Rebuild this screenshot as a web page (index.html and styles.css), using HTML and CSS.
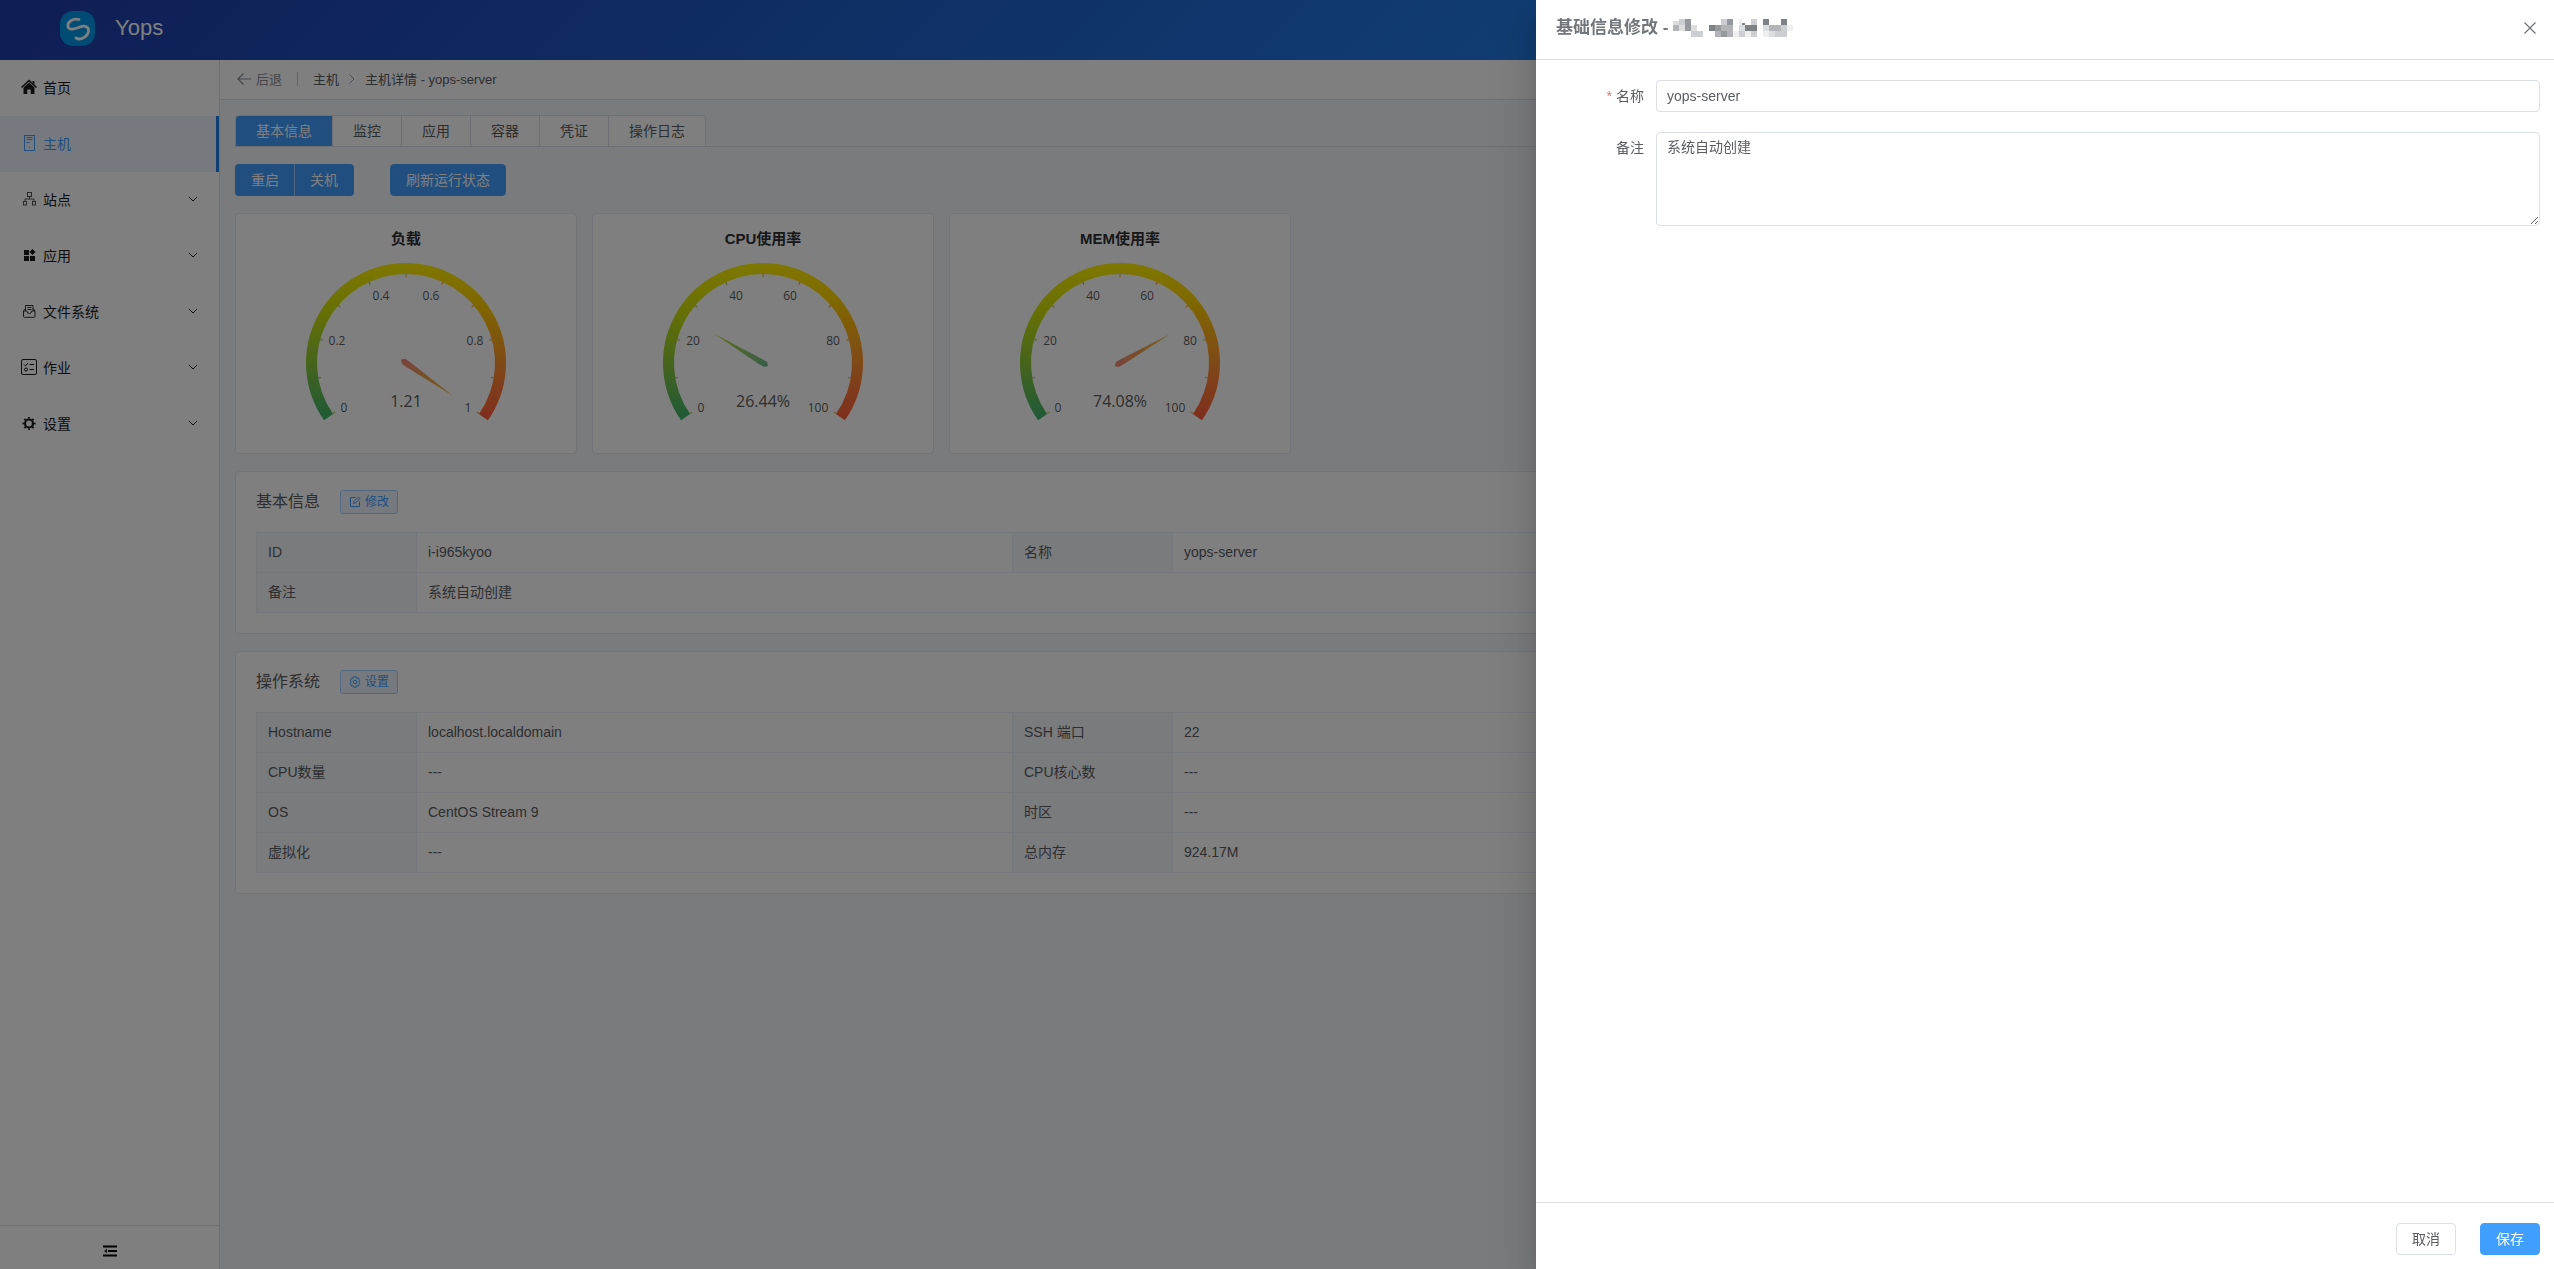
FILE: index.html
```
<!DOCTYPE html>
<html lang="zh-CN">

<head>
    <meta charset="UTF-8" />
    <meta name="viewport" content="width=device-width, initial-scale=1.0" />
    <title>Yops</title>
    <link rel="stylesheet" href="styles.css">
</head>

<body>
    <!-- Shared icons -->
    <svg class="sprite" aria-hidden="true">
        <defs>
            <linearGradient id="ringLeft" gradientUnits="userSpaceOnUse" x1="0" y1="-100" x2="0" y2="58">
                <stop offset="0" stop-color="#fff000" />
                <stop offset="0.3" stop-color="#cfe00a" />
                <stop offset="0.65" stop-color="#88c83c" />
                <stop offset="1" stop-color="#3cb371" />
            </linearGradient>
            <linearGradient id="ringRight" gradientUnits="userSpaceOnUse" x1="0" y1="-100" x2="0" y2="58">
                <stop offset="0" stop-color="#fff000" />
                <stop offset="0.25" stop-color="#ffd000" />
                <stop offset="0.65" stop-color="#ff9030" />
                <stop offset="1" stop-color="#ff5a3c" />
            </linearGradient>
            <linearGradient id="needleRed" gradientUnits="userSpaceOnUse" x1="0" y1="0" x2="58" y2="0">
                <stop offset="0" stop-color="#f08a70" />
                <stop offset="1" stop-color="#ecc62a" />
            </linearGradient>
            <linearGradient id="needleGreen" gradientUnits="userSpaceOnUse" x1="0" y1="0" x2="58" y2="0">
                <stop offset="0" stop-color="#74bf8c" />
                <stop offset="1" stop-color="#c4dc28" />
            </linearGradient>
        </defs>
        <symbol id="gauge-ring" viewBox="-170 -149 340 239">
            <path d="M-77.4 54.2A94.5 94.5 0 0 1 0 -94.5" fill="none" stroke="url(#ringLeft)" stroke-width="11" />
            <path d="M77.4 54.2A94.5 94.5 0 0 0 0 -94.5" fill="none" stroke="url(#ringRight)" stroke-width="11" />
            <path d="M-71.7 50.2A87.5 87.5 0 0 1 0 -87.5" fill="none" stroke="#a0c040" stroke-width="3" pathLength="125" stroke-dasharray="0.7 24.3" />
            <path d="M71.7 50.2A87.5 87.5 0 0 0 0 -87.5" fill="none" stroke="#f0a030" stroke-width="3" pathLength="125" stroke-dasharray="0.7 24.3" />
        </symbol>
        <symbol id="chevron" viewBox="0 0 12 12">
            <path d="M2 4l4 4 4-4" fill="none" stroke="currentColor" />
        </symbol>
    </svg>

    <div class="app">
        <header class="header">
            <svg class="logo" viewBox="0 0 35 35">
                <rect width="35" height="35" rx="13" fill="#0099e8" />
                <path d="M19 8.500C13 7 7 11 8 15.500C9 20 15 18 20 16C25 14 29 16 28.500 20C28 25 21 30 16 27" fill="none" stroke="#fff" stroke-width="2.800" stroke-linecap="round" />
            </svg>
            <span class="brand">Yops</span>
        </header>

        <div class="body">
            <aside class="sidebar">
                <nav class="menu">
                    <a class="menu-item" href="#">
                        <svg class="menu-icon" viewBox="0 0 18 18">
                            <path d="M1.500 9.500L9 2.500l7.500 7" fill="none" stroke="currentColor" stroke-width="1.600" />
                            <path d="M3.500 9.500L9 4.500l5.500 5v6.500h-3.800v-4.500H7.300V16H3.500z" fill="currentColor" />
                            <path d="M12.500 3h2v3.500l-2-1.800z" fill="currentColor" />
                        </svg>
                        <span>首页</span>
                    </a>
                    <a class="menu-item active" href="#">
                        <svg class="menu-icon" viewBox="0 0 18 18" fill="none" stroke="currentColor">
                            <rect x="4.500" y="1.500" width="10" height="15" />
                            <path d="M6.500 3.500h6M6.500 5.500h6M6.500 8.500h3M9 13.500h1" />
                        </svg>
                        <span>主机</span>
                    </a>
                    <a class="menu-item" href="#">
                        <svg class="menu-icon" viewBox="0 0 18 18" fill="none" stroke="#555">
                            <rect x="7.500" y="2.500" width="4" height="4" />
                            <rect x="3.500" y="11.500" width="3" height="3.500" />
                            <rect x="12.500" y="11.500" width="3" height="3.500" />
                            <path d="M9.500 6.500V9M5 11.500V9h9v2.500" />
                        </svg>
                        <span>站点</span>
                        <svg class="chevron"><use href="#chevron" /></svg>
                    </a>
                    <a class="menu-item" href="#">
                        <svg class="menu-icon" viewBox="0 0 18 18" fill="currentColor">
                            <rect x="4" y="4" width="5" height="5" />
                            <path d="M12.500 3l3 3-3 3-3-3z" />
                            <rect x="4" y="10" width="5" height="5" />
                            <rect x="10" y="10" width="5" height="5" />
                        </svg>
                        <span>应用</span>
                        <svg class="chevron"><use href="#chevron" /></svg>
                    </a>
                    <a class="menu-item" href="#">
                        <svg class="menu-icon" viewBox="0 0 18 18" fill="none" stroke="#333">
                            <path d="M5.500 6.500L3.500 9v5.500q0 .8.8.8h9.900q.8 0 .8-.8V9l-1.700-2.500M3.500 9h3.300q.3 2.500 2.500 2.500t2.500-2.500H15" />
                            <path d="M5.500 9V3.500h7.500V9M7.500 5.500h4M7.500 7.500h4" />
                        </svg>
                        <span>文件系统</span>
                        <svg class="chevron"><use href="#chevron" /></svg>
                    </a>
                    <a class="menu-item" href="#">
                        <svg class="menu-icon" viewBox="0 0 18 18" fill="none" stroke="currentColor">
                            <rect x="1.500" y="1.500" width="15" height="15" rx="1.500" />
                            <path d="M4 6.500L5.500 8l2.500-3M9.500 6.500h4.500M9.500 11.500h4.500" />
                            <circle cx="6" cy="11.500" r="1.500" />
                        </svg>
                        <span>作业</span>
                        <svg class="chevron"><use href="#chevron" /></svg>
                    </a>
                    <a class="menu-item" href="#">
                        <svg class="menu-icon" viewBox="0 0 18 18" fill="none" stroke="currentColor">
                            <circle cx="9" cy="9.500" r="4" stroke-width="2.200" />
                            <circle cx="9" cy="9.500" r="5.700" stroke-width="1.800" pathLength="80" stroke-dasharray="4 6" stroke-dashoffset="2" />
                        </svg>
                        <span>设置</span>
                        <svg class="chevron"><use href="#chevron" /></svg>
                    </a>
                </nav>
                <div class="sidebar-footer">
                    <button class="collapse" type="button" aria-label="收起菜单">
                        <svg width="14" height="12" viewBox="0 0 14 12">
                            <path d="M0 1.500h14M5 6h9M0 10.500h14" stroke="#000" stroke-width="2" />
                            <path d="M4 3.500v5L1 6z" fill="#333" />
                        </svg>
                    </button>
                </div>
            </aside>

            <main class="main">
                <div class="page-header">
                    <a class="back" href="#">
                        <svg width="14" height="12" viewBox="0 0 14 12">
                            <path d="M14 6H1M6.500 .5L1 6l5.500 5.500" fill="none" stroke="currentColor" stroke-width="1.200" />
                        </svg>
                        后退
                    </a>
                    <span class="divider"></span>
                    <a class="crumb" href="#">主机</a>
                    <svg class="crumb-arrow" width="6" height="10" viewBox="0 0 6 10">
                        <path d="M.5 .5L5 5 .5 9.500" fill="none" stroke="#999ca3" />
                    </svg>
                    <span class="crumb">主机详情 - yops-server</span>
                </div>

                <div class="content">
                    <div class="tabs">
                        <div class="tab-nav">
                            <button class="tab active" type="button">基本信息</button>
                            <button class="tab" type="button">监控</button>
                            <button class="tab" type="button">应用</button>
                            <button class="tab" type="button">容器</button>
                            <button class="tab" type="button">凭证</button>
                            <button class="tab" type="button">操作日志</button>
                        </div>
                    </div>

                    <div class="actions">
                        <div class="btn-group">
                            <button class="btn primary" type="button">重启</button>
                            <button class="btn primary" type="button">关机</button>
                        </div>
                        <button class="btn primary" type="button">刷新运行状态</button>
                    </div>

                    <!-- Gauges -->
                    <div class="gauges">
                        <div class="card">
                            <svg class="gauge" viewBox="-170 -149 340 239">
                                <text class="gauge-title" x="0" y="-119">负载</text>
                                <use href="#gauge-ring" x="-170" y="-149" width="340" height="239" />
                                <path d="M-6 0L-3 -3L3 -3L58 0L3 3L-3 3z" fill="url(#needleRed)" transform="rotate(35)" />
                                <g class="gauge-label">
                                    <text x="-62" y="49">0</text>
                                    <text x="-69" y="-18">0.2</text>
                                    <text x="-25" y="-63">0.4</text>
                                    <text x="25" y="-63">0.6</text>
                                    <text x="69" y="-18">0.8</text>
                                    <text x="62" y="49">1</text>
                                </g>
                                <text class="gauge-value" x="0" y="44">1.21</text>
                            </svg>
                        </div>
                        <div class="card">
                            <svg class="gauge" viewBox="-170 -149 340 239">
                                <text class="gauge-title" x="0" y="-119">CPU使用率</text>
                                <use href="#gauge-ring" x="-170" y="-149" width="340" height="239" />
                                <path d="M-6 0L-3 -3L3 -3L58 0L3 3L-3 3z" fill="url(#needleGreen)" transform="rotate(-149)" />
                                <g class="gauge-label">
                                    <text x="-62" y="49">0</text>
                                    <text x="-70" y="-18">20</text>
                                    <text x="-27" y="-63">40</text>
                                    <text x="27" y="-63">60</text>
                                    <text x="70" y="-18">80</text>
                                    <text x="55" y="49">100</text>
                                </g>
                                <text class="gauge-value" x="0" y="44">26.44%</text>
                            </svg>
                        </div>
                        <div class="card">
                            <svg class="gauge" viewBox="-170 -149 340 239">
                                <text class="gauge-title" x="0" y="-119">MEM使用率</text>
                                <use href="#gauge-ring" x="-170" y="-149" width="340" height="239" />
                                <path d="M-6 0L-3 -3L3 -3L58 0L3 3L-3 3z" fill="url(#needleRed)" transform="rotate(-30)" />
                                <g class="gauge-label">
                                    <text x="-62" y="49">0</text>
                                    <text x="-70" y="-18">20</text>
                                    <text x="-27" y="-63">40</text>
                                    <text x="27" y="-63">60</text>
                                    <text x="70" y="-18">80</text>
                                    <text x="55" y="49">100</text>
                                </g>
                                <text class="gauge-value" x="0" y="44">74.08%</text>
                            </svg>
                        </div>
                    </div>

                    <section class="card panel">
                        <div class="panel-header">
                            <h2>基本信息</h2>
                            <button class="btn-small" type="button">
                                <svg width="12" height="12" viewBox="0 0 12 12" fill="none" stroke="currentColor">
                                    <path d="M6.500 1.500h-5v9h9v-5M4.500 7.500l.5-2L9.500 1l1.500 1.500L6.500 7z" />
                                </svg>
                                修改
                            </button>
                        </div>
                        <table class="desc">
                            <colgroup>
                                <col class="col-label">
                                <col class="col-value">
                                <col class="col-label">
                                <col>
                            </colgroup>
                            <tr>
                                <th scope="row">ID</th>
                                <td>i-i965kyoo</td>
                                <th scope="row">名称</th>
                                <td>yops-server</td>
                            </tr>
                            <tr>
                                <th scope="row">备注</th>
                                <td colspan="3">系统自动创建</td>
                            </tr>
                        </table>
                    </section>

                    <section class="card panel">
                        <div class="panel-header">
                            <h2>操作系统</h2>
                            <button class="btn-small" type="button">
                                <svg width="12" height="12" viewBox="0 0 12 12" fill="none" stroke="currentColor">
                                    <path d="M4.700 .8h2.600l.5 1.500 1.500-.3 1.400 2.300L9.800 6l.9 1.700L9.300 10l-1.500-.3-.5 1.500H4.700l-.5-1.500-1.500.3-1.400-2.300L2.200 6l-.9-1.700L2.700 2l1.500.3z" />
                                    <circle cx="6" cy="6" r="1.800" />
                                </svg>
                                设置
                            </button>
                        </div>
                        <table class="desc">
                            <colgroup>
                                <col class="col-label">
                                <col class="col-value">
                                <col class="col-label">
                                <col>
                            </colgroup>
                            <tr>
                                <th scope="row">Hostname</th>
                                <td>localhost.localdomain</td>
                                <th scope="row">SSH 端口</th>
                                <td>22</td>
                            </tr>
                            <tr>
                                <th scope="row">CPU数量</th>
                                <td>---</td>
                                <th scope="row">CPU核心数</th>
                                <td>---</td>
                            </tr>
                            <tr>
                                <th scope="row">OS</th>
                                <td>CentOS Stream 9</td>
                                <th scope="row">时区</th>
                                <td>---</td>
                            </tr>
                            <tr>
                                <th scope="row">虚拟化</th>
                                <td>---</td>
                                <th scope="row">总内存</th>
                                <td>924.17M</td>
                            </tr>
                        </table>
                    </section>
                </div>
            </main>
        </div>
    </div>

    <!-- Edit drawer -->
    <div class="overlay">
        <form class="drawer" role="dialog" aria-labelledby="drawerTitle">
            <div class="drawer-header">
                <h1 id="drawerTitle">基础信息修改 -</h1>
                <svg class="masked" width="120" height="18" viewBox="0 0 20 3" shape-rendering="crispEdges">
                    <path fill="#dcdddf" d="M0 .4h1V1H0zM1 1h1v1H1zM3 1h1v1H3zM11 1h1v1h-1zM15 1h1v1h-1zM16 2h1v1h-1z" />
                    <path fill="#cdced1" d="M1 0h1v1H1zM3 2h2v1H3zM8 0h1v1H8zM11 2h1v1h-1zM13 0h1v1h-1zM13 2h1v1h-1zM17 2h2v1h-2zM18 1h1v1h-1z" />
                    <path fill="#b2b4b8" d="M0 1h1v1H0zM8 1h2v1H8zM9 2h1v1H9zM7 2h1v1H7zM16 1h2v1h-2z" />
                    <path fill="#95989d" d="M2 0h1v2H2zM7 1h1v1H7zM8 2h1v1H8zM9 0h1v1H9z" />
                    <path fill="#7e8186" d="M6 1h1v1H6zM12 1h2v1h-2zM15 0h1v1h-1zM18 0h1v1h-1zM11.500 .6h.5V1h-.5z" />
                    <path fill="#efeff0" d="M10 2h1v1h-1zM11 0h.5v1H11zM15 2h1v1h-1zM19 1h1v1h-1zM12 2h1v1h-1z" />
                </svg>
                <button class="close" type="button" aria-label="关闭">
                    <svg width="12" height="12" viewBox="0 0 12 12">
                        <path d="M.5 .5l11 11M11.500 .5l-11 11" stroke="currentColor" stroke-width="1.300" />
                    </svg>
                </button>
            </div>
            <div class="drawer-body">
                <div class="form-item required">
                    <label for="name">名称</label>
                    <input id="name" type="text" value="yops-server" autocomplete="off" />
                </div>
                <div class="form-item">
                    <label for="remark">备注</label>
                    <textarea id="remark" rows="4">系统自动创建</textarea>
                </div>
            </div>
            <div class="drawer-footer">
                <button class="btn" type="button">取消</button>
                <button class="btn primary" type="submit">保存</button>
            </div>
        </form>
    </div>
</body>

</html>
```
FILE: styles.css
```
* {
    box-sizing: border-box;
}

body {
    margin: 0;
    font-family: "Liberation Sans", "Noto Sans CJK SC", sans-serif;
    font-size: 14px;
    color: #5a5c60;
}

a {
    color: inherit;
    text-decoration: none;
}

button,
input,
textarea {
    font: inherit;
    color: inherit;
}

button {
    cursor: pointer;
}

.sprite {
    position: absolute;
    width: 0;
    height: 0;
}

.app {
    display: flex;
    flex-direction: column;
    height: 100vh;
}

/* Header */
.header {
    flex: none;
    display: flex;
    align-items: center;
    gap: 20px;
    height: 60px;
    padding: 0 60px 4px;
    background: linear-gradient(135deg, #1e3ca8, #207ae6 60%, #209cff);
}

.logo {
    width: 35px;
    height: 35px;
}

.brand {
    font-size: 22px;
    color: #fff;
}

.body {
    flex: 1;
    display: flex;
    min-height: 0;
}

/* Sidebar */
.sidebar {
    flex: none;
    display: flex;
    flex-direction: column;
    width: 220px;
    background: #fff;
    border-right: 1px solid #dcdfe6;
}

.menu {
    flex: 1;
}

.menu-item {
    display: flex;
    align-items: center;
    gap: 5px;
    height: 56px;
    padding: 0 20px 2px;
    color: #1a1a1a;
}

.menu-item.active {
    color: #409eff;
    background: #ecf5ff;
    border-right: 3px solid #1e80e8;
}

.menu-icon {
    width: 18px;
    height: 18px;
}

.chevron {
    width: 12px;
    height: 12px;
    margin-left: auto;
}

.sidebar-footer {
    display: flex;
    justify-content: center;
    height: 44px;
    padding-top: 6px;
    border-top: 1px solid #dcdfe6;
}

.collapse {
    display: flex;
    align-items: center;
    padding: 0;
    background: none;
    border: none;
}

/* Page */
.main {
    flex: 1;
    min-width: 0;
    overflow: hidden;
    background: #f5f7fa;
}

.page-header {
    display: flex;
    align-items: center;
    height: 40px;
    padding: 0 17px 2px;
    font-size: 13px;
    background: #fff;
    border-bottom: 1px solid #dcdfe6;
}

.back {
    display: flex;
    align-items: center;
    gap: 5px;
    color: #8b8d92;
}

.divider {
    width: 1px;
    height: 14px;
    margin: 0 15px;
    background: #c8cbd2;
}

.crumb-arrow {
    margin: 0 10px;
}

.content {
    display: flex;
    flex-direction: column;
    gap: 17px;
    padding: 15px;
}

.tabs {
    display: flex;
    border-bottom: 1px solid #dcdfe6;
}

.tab-nav {
    display: flex;
    border: 1px solid #dcdfe6;
    border-bottom: none;
    border-radius: 4px 4px 0 0;
    overflow: hidden;
}

.tab {
    height: 30px;
    padding: 0 20px;
    line-height: 20px;
    background: #fff;
    border: none;
    border-right: 1px solid #dcdfe6;
}

.tab:last-child {
    border-right: none;
}

.tab.active {
    color: #fff;
    background: #409eff;
}

.actions {
    display: flex;
    gap: 36px;
}

.btn-group {
    display: flex;
}

.btn {
    height: 32px;
    padding: 0 15px;
    line-height: 20px;
    background: #fff;
    border: 1px solid #dcdfe6;
    border-radius: 4px;
}

.btn.primary {
    color: #fff;
    background: #409eff;
    border-color: #409eff;
}

.btn-group .btn:first-child {
    border-radius: 4px 0 0 4px;
    border-right: none;
}

.btn-group .btn:last-child {
    border-radius: 0 4px 4px 0;
    border-left-color: #a0cfff;
}

/* Gauges */
.card {
    background: #fff;
    border: 1px solid #e4e7ed;
    border-radius: 4px;
}

.gauges {
    display: flex;
    gap: 15px;
}

.gauge {
    display: block;
    width: 340px;
    height: 239px;
}

.gauge text {
    text-anchor: middle;
    fill: #5a5c60;
}

.gauge .gauge-title {
    font-size: 15px;
    font-weight: bold;
    fill: #303133;
}

.gauge-label,
.gauge-value {
    font-family: "Open Sans", sans-serif;
}

.gauge-label {
    font-size: 12px;
}

.gauge-value {
    font-size: 16px;
}

/* Info panels */
.panel {
    padding: 18px 20px 20px;
}

.panel-header {
    display: flex;
    align-items: center;
    gap: 20px;
    margin-bottom: 18px;
}

.panel-header h2 {
    margin: 0;
    font-size: 16px;
    font-weight: normal;
    line-height: 20px;
}

.btn-small {
    display: flex;
    align-items: center;
    gap: 4px;
    height: 24px;
    padding: 0 8px;
    font-size: 12px;
    line-height: 16px;
    color: #409eff;
    background: #ecf5ff;
    border: 1px solid #a0cfff;
    border-radius: 3px;
}

.desc {
    width: 100%;
    table-layout: fixed;
    border-collapse: collapse;
}

.col-label {
    width: 160px;
}

.col-value {
    width: 596px;
}

.desc th,
.desc td {
    padding: 8px 11px;
    line-height: 23px;
    font-weight: normal;
    text-align: left;
    border: 1px solid #ebeef5;
}

.desc th {
    background: #f5f7fa;
}

/* Drawer */
.overlay {
    position: fixed;
    inset: 0;
    overflow: hidden;
    background: rgba(0, 0, 0, 0.5);
}

.drawer {
    position: absolute;
    top: 0;
    right: 0;
    bottom: 0;
    display: flex;
    flex-direction: column;
    width: 1018px;
    max-width: 100%;
    background: #fff;
    box-shadow: 0 16px 48px 16px rgba(0, 0, 0, 0.08), 0 12px 32px rgba(0, 0, 0, 0.12), 0 8px 16px -8px rgba(0, 0, 0, 0.16);
}

.drawer-header {
    display: flex;
    align-items: center;
    height: 60px;
    padding: 0 18px 3px 20px;
    color: #72767b;
    border-bottom: 1px solid #dcdfe6;
}

.drawer-header h1 {
    margin: 0 5px 0 0;
    font-size: 17px;
    line-height: 24px;
}

.close {
    display: flex;
    margin-left: auto;
    padding: 0;
    background: none;
    border: none;
}

.drawer-body {
    flex: 1;
    display: flex;
    flex-direction: column;
    gap: 20px;
    padding: 20px 14px 20px 20px;
}

.form-item {
    display: flex;
}

.form-item label {
    flex: none;
    width: 100px;
    padding-right: 12px;
    line-height: 32px;
    text-align: right;
}

.form-item.required label::before {
    content: "*";
    margin-right: 4px;
    color: #f56c6c;
}

.form-item input,
.form-item textarea {
    flex: 1;
    min-width: 0;
    padding: 0 10px;
    background: #fff;
    border: 1px solid #dcdfe6;
    border-radius: 4px;
    outline: none;
}

.form-item input {
    height: 32px;
}

.form-item textarea {
    height: 94px;
    padding: 4px 10px;
    line-height: 21px;
    resize: vertical;
}

.drawer-footer {
    display: flex;
    justify-content: flex-end;
    gap: 24px;
    padding: 20px 14px 14px;
    border-top: 1px solid #dcdfe6;
}
```
